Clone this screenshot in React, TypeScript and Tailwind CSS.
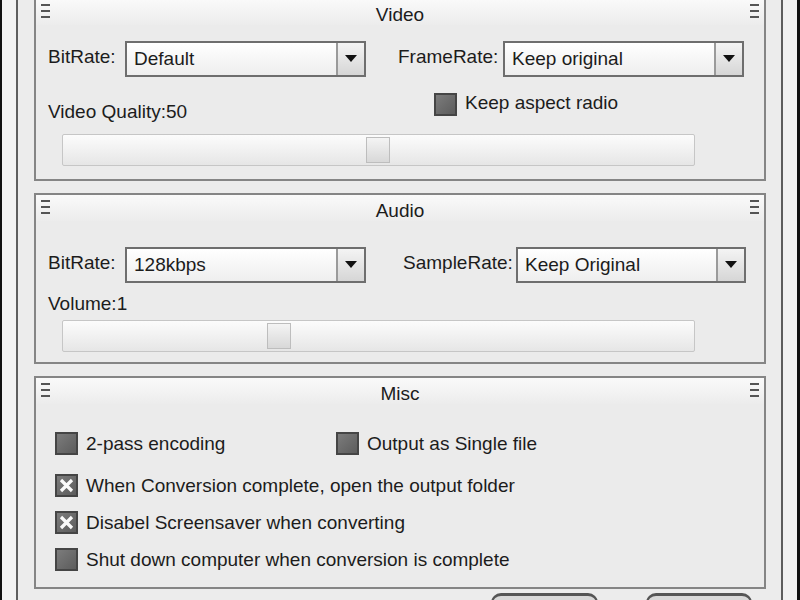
import React from "react";

const FONT = { fontFamily: '"Liberation Sans", Arial, sans-serif' };

function Grip() {
  return (
    <div className="flex flex-col gap-[4px] w-[9px]">
      <div className="h-[2px] bg-[#555]" />
      <div className="h-[2px] bg-[#555]" />
      <div className="h-[2px] bg-[#555]" />
    </div>
  );
}

function Header({ title }: { title: string }) {
  return (
    <div className="h-[26px] shrink-0 flex items-start justify-between px-[5px] pt-[5px] bg-gradient-to-b from-[#fafafa] to-[#ececec]">
      <Grip />
      <div className="-mt-[3px] text-[19px] text-[#1c1c1c]">{title}</div>
      <Grip />
    </div>
  );
}

function Combo({ value, width }: { value: string; width: string }) {
  return (
    <div className={`${width} h-[36px] shrink-0 flex border-2 border-[#6e6e6e] bg-gradient-to-b from-[#ffffff] to-[#eeeeee]`}>
      <div className="flex-1 flex items-center pl-[7px] text-[19px] text-[#1c1c1c]">{value}</div>
      <div className="w-[28px] border-l-2 border-[#9a9a9a] bg-gradient-to-b from-[#f4f4f4] to-[#d6d6d6] flex items-center justify-center">
        <svg width="12" height="8" viewBox="0 0 12 8">
          <path d="M0 0 L12 0 L6 7 Z" fill="#111" />
        </svg>
      </div>
    </div>
  );
}

function Check({ checked }: { checked?: boolean }) {
  return (
    <div className="w-[23px] h-[23px] shrink-0 border-2 border-[#454545] bg-gradient-to-br from-[#7c7c7c] to-[#5c5c5c] flex items-center justify-center">
      {checked && (
        <svg width="15" height="15" viewBox="0 0 15 15">
          <path d="M2 2 L13 13 M13 2 L2 13" stroke="#fafafa" strokeWidth="3.2" />
        </svg>
      )}
    </div>
  );
}

function Slider({ pos }: { pos: number }) {
  return (
    <div className="ml-[14px] w-[633px] h-[32px] shrink-0 border border-[#c6c6c6] rounded-[2px] bg-gradient-to-b from-[#fcfcfc] to-[#e6e6e6] relative">
      <div
        className="absolute top-[2px] w-[24px] h-[26px] border border-[#bdbdbd] bg-gradient-to-b from-[#f4f4f4] to-[#d8d8d8]"
        style={{ left: pos }}
      />
    </div>
  );
}

function CheckRow({ label, checked }: { label: string; checked?: boolean }) {
  return (
    <div className="flex items-center gap-[8px]">
      <Check checked={checked} />
      <span className="text-[19px] leading-[23px]">{label}</span>
    </div>
  );
}

export default function App() {
  return (
    <div style={FONT} className="w-[800px] h-[600px] overflow-hidden flex bg-[#ececec] text-[#1c1c1c]">
      <div className="w-[2px] bg-[#111]" />
      <div className="w-[14px] bg-[#f2f2f2]" />
      <div className="w-[2px] bg-[#5e5e5e]" />

      <div className="w-[763px] pl-[16px] pr-[15px] flex flex-col">
        {/* Video */}
        <div className="-mt-[3px] h-[184px] shrink-0 border-2 border-[#858585] bg-[#ebebeb] flex flex-col">
          <Header title="Video" />
          <div className="pl-[12px] flex flex-col">
            <div className="mt-[16px] flex items-center">
              <div className="w-[77px] text-[19px] -mt-[4px]">BitRate:</div>
              <Combo value="Default" width="w-[241px]" />
              <div className="ml-[32px] w-[105px] text-[19px] -mt-[4px]">FrameRate:</div>
              <Combo value="Keep original" width="w-[241px]" />
            </div>
            <div className="h-[57px] shrink-0 flex items-start">
              <div className="mt-[21px] w-[386px] text-[19px]">Video Quality:50</div>
              <div className="mt-[14px] flex items-center gap-[8px]">
                <Check />
                <span className="text-[19px] -mt-[2px]">Keep aspect radio</span>
              </div>
            </div>
            <Slider pos={303} />
          </div>
        </div>

        {/* Audio */}
        <div className="mt-[12px] h-[171px] shrink-0 border-2 border-[#858585] bg-[#ebebeb] flex flex-col">
          <Header title="Audio" />
          <div className="pl-[12px] flex flex-col">
            <div className="mt-[26px] flex items-center">
              <div className="w-[77px] text-[19px] -mt-[4px]">BitRate:</div>
              <Combo value="128kbps" width="w-[241px]" />
              <div className="ml-[37px] w-[113px] text-[19px] -mt-[4px]">SampleRate:</div>
              <Combo value="Keep Original" width="w-[230px]" />
            </div>
            <div className="mt-[9px] h-[23px] text-[19px] leading-[23px]">Volume:1</div>
            <div className="mt-[5px]">
              <Slider pos={204} />
            </div>
          </div>
        </div>

        {/* Misc */}
        <div className="mt-[12px] h-[213px] shrink-0 border-2 border-[#858585] bg-[#ebebeb] flex flex-col">
          <Header title="Misc" />
          <div className="pl-[19px] pt-[28px] flex flex-col gap-[14px]">
            <div className="mb-[5px] flex items-center">
              <div className="w-[281px]">
                <CheckRow label="2-pass encoding" />
              </div>
              <CheckRow label="Output as Single file" />
            </div>
            <CheckRow checked label="When Conversion complete, open the output folder" />
            <CheckRow checked label="Disabel Screensaver when converting" />
            <CheckRow label="Shut down computer when conversion is complete" />
          </div>
        </div>

        {/* Buttons */}
        <div className="mt-[4px] flex shrink-0">
          <div className="ml-[457px] w-[107px] h-[20px] rounded-t-[10px] border-t-[3px] border-x-2 border-[#555] bg-[#d8d8d8]" />
          <div className="ml-[48px] w-[106px] h-[20px] rounded-t-[10px] border-t-[3px] border-x-2 border-[#555] bg-[#d8d8d8]" />
        </div>
      </div>

      <div className="w-[2px] bg-[#5e5e5e]" />
      <div className="w-[14px] bg-[#f2f2f2]" />
      <div className="w-[3px] bg-[#111]" />
    </div>
  );
}
